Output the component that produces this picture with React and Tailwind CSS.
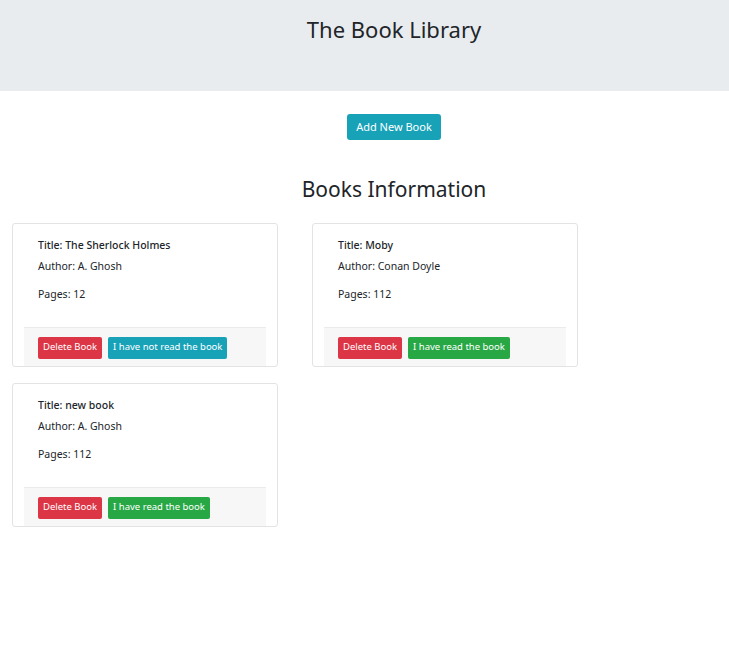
const BOOKS = [
  { title: 'The Sherlock Holmes', author: 'A. Ghosh', pages: 12, read: true },
  { title: 'Moby', author: 'Conan Doyle', pages: 112, read: false },
  { title: 'new book', author: 'A. Ghosh', pages: 112, read: false },
]

function BookCard({ book }) {
  return (
    <div className="w-[266px] h-[144px] border border-[#e3e3e3] rounded-[3px] bg-white flex flex-col">
      <div className="flex-1 pl-[25px] pt-[13px] text-[10.5px] text-[#212529]">
        <div className="font-medium leading-[16px]">Title: {book.title}</div>
        <div className="leading-[16px] mt-[5px]">Author: {book.author}</div>
        <div className="leading-[16px] mt-[12px]">Pages: {book.pages}</div>
      </div>
      <div className="mx-[11px] h-[39px] bg-[#f7f7f7] border-t border-[#ebebeb] flex items-center gap-[6px] pl-[14px] pt-px">
        <button className="h-[22px] px-[5px] rounded-[2px] bg-[#dc3545] text-white text-[9.5px]">Delete Book</button>
        {book.read ? (
          <button className="h-[22px] px-[5px] rounded-[2px] bg-[#17a2b8] text-white text-[9.5px]">I have not read the book</button>
        ) : (
          <button className="h-[22px] px-[5px] rounded-[2px] bg-[#28a745] text-white text-[9.5px]">I have read the book</button>
        )}
      </div>
    </div>
  )
}

export default function App() {
  return (
    <div className="min-h-[651px] bg-white text-[#212529] font-['Noto_Sans',sans-serif]">
      <div className="h-[91px] bg-[#e9ecef] flex justify-center pl-[59px] pt-[12px]">
        <h1 className="text-[22px] leading-[34px]">The Book Library</h1>
      </div>
      <div className="flex justify-center pl-[59px] mt-[23px]">
        <button className="h-[26px] px-[9px] rounded-[3px] bg-[#17a2b8] text-white text-[11px]">Add New Book</button>
      </div>
      <h2 className="text-center pl-[59px] mt-[34px] text-[21px] leading-[30px]">Books Information</h2>
      <div className="flex flex-wrap w-[650px] gap-x-[34px] gap-y-[16px] ml-[12px] mt-[19px]">
        {BOOKS.map((b, i) => <BookCard key={i} book={b} />)}
      </div>
    </div>
  )
}
